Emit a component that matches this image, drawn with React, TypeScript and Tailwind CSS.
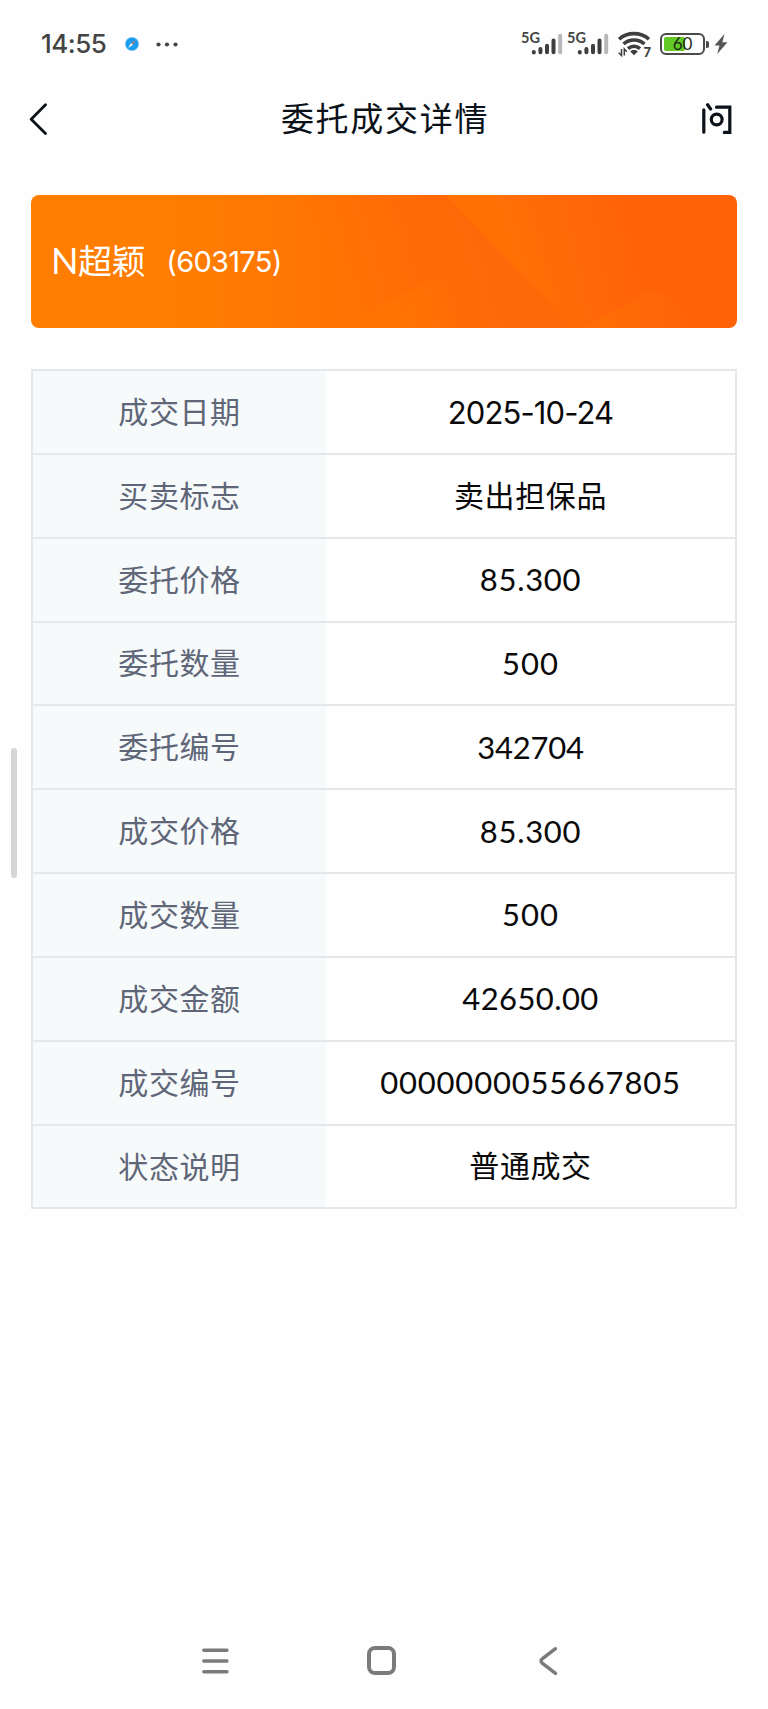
import clsx from "clsx";

const rows = [
  { label: "成交日期", value: "2025-10-24", style: "font-['Inter'] text-[31px] tracking-[-0.9px] pt-px" },
  { label: "买卖标志", value: "卖出担保品", style: "text-[30px] tracking-[0.6px] pb-[4px]" },
  { label: "委托价格", value: "85.300", style: "font-['Lato'] text-[31px] tracking-[0.7px]" },
  { label: "委托数量", value: "500", style: "font-['Lato'] text-[31px] tracking-[1px]" },
  { label: "委托编号", value: "342704", style: "font-['Lato'] text-[31px] tracking-[-0.2px]" },
  { label: "成交价格", value: "85.300", style: "font-['Lato'] text-[31px] tracking-[0.7px]" },
  { label: "成交数量", value: "500", style: "font-['Lato'] text-[31px] tracking-[1px]" },
  { label: "成交金额", value: "42650.00", style: "font-['Lato'] text-[31px] tracking-[0.4px]" },
  { label: "成交编号", value: "0000000055667805", style: "font-['Lato'] text-[31px] tracking-[0.8px]" },
  { label: "状态说明", value: "普通成交", style: "text-[30px] tracking-[0.6px] pb-[5px]" },
];

function Signal() {
  return (
    <div className="relative h-[24px] w-[42px]">
      <span className="absolute left-0 top-0 font-['Lato'] text-[14.5px] font-bold leading-[11px] text-[#444]">
        5G
      </span>
      <svg className="absolute left-[10px] top-0" width="32" height="24" viewBox="0 0 32 24" strokeLinecap="round" strokeWidth="4" stroke="#3f3f3f">
        <path d="M2.8 20.4v-.4M9.4 20.2v-3.200M16 20.200v-6.400M22.500 20.200V8.400" />
        <path d="M29.200 20.200V3.800" stroke="#b8b8b8" />
      </svg>
    </div>
  );
}

function Wifi() {
  return (
    <div className="relative ml-[9px] h-[26px] w-[32px]">
      <svg width="32" height="26" viewBox="0 0 32 26" fill="none" stroke="#3f3f3f" strokeWidth="3.6">
        <path d="M1 8.200C9.500.8 22.500.8 31 8.200" />
        <path d="M5.500 13C11.600 7.700 20.400 7.700 26.500 13" />
        <path d="M10 17.600c3.700-3.100 8.300-3.100 12 0" />
        <path d="M12.200 20.500c2.200-1.900 5.400-1.900 7.600 0L16 24.300z" fill="#3f3f3f" stroke="none" />
        <path d="M3.500 18v6.500L.8 21.800M6.300 24.500V18l2.500 2.800" strokeWidth="1.500" />
      </svg>
      <span className="absolute -right-px bottom-0 font-['Lato'] text-[13px] font-black leading-[10px] text-[#3f3f3f]">
        7
      </span>
    </div>
  );
}

function Battery() {
  return (
    <div className="ml-[10px] flex items-center">
      <div className="relative h-[22px] w-[45px] rounded-[6px] border-[2.5px] border-[#4a4a4a] p-[2px]">
        <div className="h-full w-[21px] rounded-[2px] bg-[#62c925]" />
        <span className="absolute inset-0 text-center font-['Lato'] text-[17px] leading-[17px] text-[#1c2a14]">
          60
        </span>
      </div>
      <div className="ml-px h-[7px] w-[3px] rounded-r-[2px] bg-[#4a4a4a]" />
      <svg className="ml-[5px]" width="14" height="22" viewBox="0 0 14 22" fill="#555">
        <path d="M10.500 1 .5 12.400h5L3.200 21 13.500 9.300H8.300z" />
      </svg>
    </div>
  );
}

function StatusBar() {
  return (
    <div className="flex h-[88px] items-center justify-between pl-[41px] pr-[40px]">
      <div className="flex items-center">
        <span className="w-[66px] whitespace-nowrap font-['Inter'] text-[26px] font-medium leading-none tracking-[-0.5px] text-[#444]">
          14:55
        </span>
        <svg className="ml-[18px]" width="14" height="14" viewBox="0 0 14 14">
          <circle cx="7" cy="7" r="6.700" fill="#1b9df0" stroke="#8fc9ee" strokeWidth=".6" />
          <path d="M11 3 8 8 6 6z" fill="#a8797f" />
          <path d="M3 11 6 6l2 2z" fill="#eaf4fa" />
        </svg>
        <svg className="ml-[17px]" width="22" height="5" viewBox="0 0 22 5" fill="#444">
          <circle cx="2.500" cy="2.500" r="2.100" />
          <circle cx="11" cy="2.500" r="2.100" />
          <circle cx="19.500" cy="2.500" r="2.100" />
        </svg>
      </div>

      <div className="flex items-center">
        <Signal />
        <div className="ml-[4px]">
          <Signal />
        </div>
        <Wifi />
        <Battery />
      </div>
    </div>
  );
}

function Header() {
  return (
    <header className="flex h-[62px] items-center justify-between pl-[29px] pr-[35px]">
      <svg width="20" height="32" viewBox="0 0 20 32" fill="none" stroke="#0b1118" strokeWidth="2.8" strokeLinecap="round" strokeLinejoin="round">
        <path d="M16.500 1.800 2.200 16.200l14.300 14.300" />
      </svg>
      <h1 className="pb-[4px] pl-[20px] text-[33px] leading-none tracking-[1.7px] text-[#0b1118]">
        委托成交详情
      </h1>
      <svg width="32" height="32" viewBox="0 0 32 32" fill="none" stroke="#0b1118" strokeWidth="3.2" strokeLinecap="round">
        <path d="M2.800 6.800v22.400M6.600 1.800l3 4.200" />
        <path d="M15.500 4.200h13.300v25.200h-5.500" />
        <circle cx="15.700" cy="16.500" r="5.400" />
      </svg>
    </header>
  );
}

function StockCard() {
  return (
    <section className="relative mx-[31px] mt-[45px] flex h-[133px] items-center overflow-hidden rounded-[8px] bg-linear-to-r from-[#ff7d00] from-20% to-[#ff6309] to-85% pl-[20px] text-white">
      <svg className="absolute inset-0" width="706" height="133" viewBox="0 0 706 133">
        <defs>
          <linearGradient id="fold" gradientUnits="userSpaceOnUse" x1="480" y1="65" x2="610" y2="25">
            <stop offset="0" stopColor="#ff7105" />
            <stop offset="1" stopColor="#ff6309" stopOpacity="0" />
          </linearGradient>
          <linearGradient id="shade" gradientUnits="userSpaceOnUse" x1="320" y1="133" x2="475" y2="60">
            <stop offset="0" stopColor="#ff6807" stopOpacity="0" />
            <stop offset="1" stopColor="#ff6807" />
          </linearGradient>
          <linearGradient id="hill" gradientUnits="userSpaceOnUse" x1="365" y1="95" x2="430" y2="80">
            <stop offset="0" stopColor="#ff7502" stopOpacity=".7" />
            <stop offset="1" stopColor="#ff7502" stopOpacity="0" />
          </linearGradient>
          <linearGradient id="hillRight" gradientUnits="userSpaceOnUse" x1="575" y1="0" x2="660" y2="0">
            <stop offset="0" stopColor="#ff7005" stopOpacity=".7" />
            <stop offset="1" stopColor="#ff7005" stopOpacity="0" />
          </linearGradient>
        </defs>
        <path d="M230 0h185l127 133H230z" fill="url(#shade)" />
        <path d="M415 0h240v133H542z" fill="url(#fold)" />
        <path d="M305 133 440 65l102 68z" fill="url(#hill)" />
        <path d="M553 133l62-35q15-3 30 10l25 25z" fill="url(#hillRight)" />
      </svg>
      <span className="relative pb-[3px] font-['Lato','Noto_Sans_CJK_SC',sans-serif] text-[34px] leading-none tracking-[-0.4px]">
        <span className="text-[36px]">N</span>超颖
      </span>
      <span className="relative ml-[21px] font-['Inter'] text-[29px] leading-none tracking-[-0.7px]">
        (603175)
      </span>
    </section>
  );
}

function NavBar() {
  return (
    <nav className="mt-auto flex h-[97px] items-center pl-[201px] text-[#7b7b7b]">
      <svg width="29" height="30" viewBox="0 0 29 30" fill="none" stroke="currentColor" strokeWidth="3.4" strokeLinecap="round">
        <path d="M2.800 4.300h23.200M2.800 15h23.200M2.800 25.700h23.200" />
      </svg>
      <div className="ml-[137px] size-[29px] rounded-[8px] border-[4px] border-current" />
      <svg className="ml-[143px]" width="19" height="30" viewBox="0 0 19 30" fill="none" stroke="currentColor" strokeWidth="3.4" strokeLinecap="round">
        <path d="M16.500 2.700 3.200 12.800q-2.300 2.200 0 4.400l13.300 10.200" />
      </svg>
    </nav>
  );
}

export default function App() {
  return (
    <div className="relative flex h-[1709px] w-[768px] flex-col bg-[#fefefe] font-['Noto_Sans_CJK_SC',sans-serif]">
      <StatusBar />
      <Header />
      <StockCard />

      <main className="mx-[31px] mt-[41px] border-x-2 border-t-2 border-[#e4e8eb]">
        {rows.map((row) => (
          <div key={row.label} className="flex h-[83.85px] border-b-2 border-[#e4e8eb]">
            <div className="flex w-[293px] items-center justify-center bg-[#f6fafb] pb-[4px] text-[30px] leading-none tracking-[0.6px] text-[#5f6678]">
              {row.label}
            </div>
            <div className={clsx("flex flex-1 items-center justify-center bg-white leading-none text-[#090909]", row.style)}>
              {row.value}
            </div>
          </div>
        ))}
      </main>

      {/* Edge gesture handle */}
      <div className="absolute left-[11px] top-[748px] h-[130px] w-[6px] rounded-full bg-[#d5d5d5]" />

      <NavBar />
    </div>
  );
}
